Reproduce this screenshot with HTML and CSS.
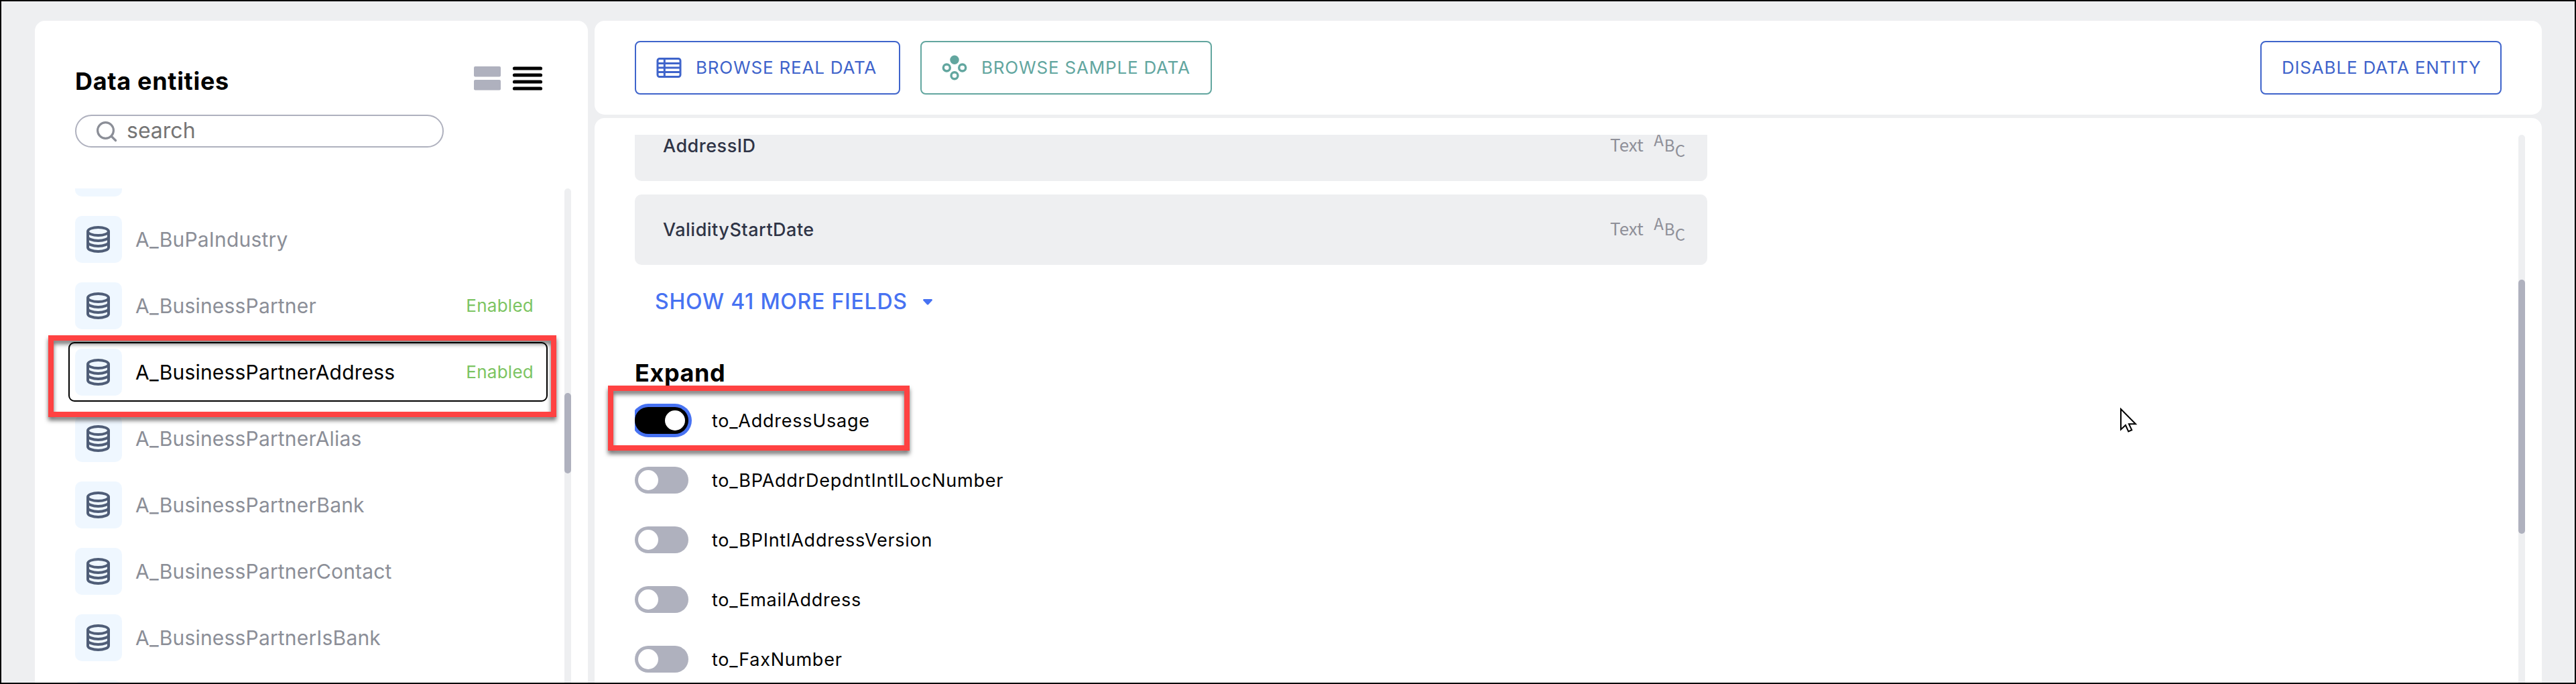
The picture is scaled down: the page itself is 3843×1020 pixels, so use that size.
FILE: index.html
```html
<!DOCTYPE html>
<html lang="en">
<head>
<meta charset="utf-8">
<title>Data entities</title>
<link rel="stylesheet" href="styles.css">
</head>
<body>
<svg class="sprite" aria-hidden="true">
  <symbol id="db" viewBox="0 0 35 40">
    <g fill="none" stroke="#4f5d77" stroke-width="4">
      <ellipse cx="17.5" cy="8" rx="15.5" ry="6"/>
      <path d="M2 8v24c0 3.300 6.900 6 15.500 6S33 35.300 33 32V8"/>
      <path d="M2 16c0 3.300 6.900 6 15.500 6S33 19.300 33 16M2 24c0 3.300 6.900 6 15.500 6S33 27.300 33 24"/>
    </g>
  </symbol>
</svg>
<div class="app">
  <aside class="sidebar">
    <header class="sidebar-head">
      <h1 class="title">Data entities</h1>
      <div class="views">
        <svg width="40" height="36" viewBox="0 0 40 36" fill="#afb1be"><rect width="40" height="15.500" rx="2"/><rect y="20" width="40" height="15.500" rx="2"/></svg>
        <svg width="46" height="36" viewBox="0 0 46 36" stroke="#000" stroke-width="5.200" stroke-linecap="round"><path d="M3.500 3h39M3.500 13h39M3.500 23h39M3.500 33h39"/></svg>
      </div>
    </header>
    <div class="search">
      <svg width="31" height="31" viewBox="0 0 31 31" fill="none" stroke="#8b8e97" stroke-width="3.200" stroke-linecap="round"><circle cx="13.500" cy="13.500" r="11.900"/><path d="M22 22l6.500 6.500"/></svg>
      <span class="placeholder">search</span>
    </div>
    <div class="list-area">
      <div class="list-clip">
        <ul class="entities">
          <li class="entity"><span class="tile"></span></li>
          <li class="entity"><span class="tile"><svg class="db"><use href="#db"/></svg></span><span class="name">A_BuPaIndustry</span></li>
          <li class="entity"><span class="tile"><svg class="db"><use href="#db"/></svg></span><span class="name">A_BusinessPartner</span><span class="status">Enabled</span></li>
          <li class="entity selected"><span class="tile"><svg class="db"><use href="#db"/></svg></span><span class="name">A_BusinessPartnerAddress</span><span class="status">Enabled</span></li>
          <li class="entity"><span class="tile"><svg class="db"><use href="#db"/></svg></span><span class="name">A_BusinessPartnerAlias</span></li>
          <li class="entity"><span class="tile"><svg class="db"><use href="#db"/></svg></span><span class="name">A_BusinessPartnerBank</span></li>
          <li class="entity"><span class="tile"><svg class="db"><use href="#db"/></svg></span><span class="name">A_BusinessPartnerContact</span></li>
          <li class="entity"><span class="tile"><svg class="db"><use href="#db"/></svg></span><span class="name">A_BusinessPartnerIsBank</span></li>
          <li class="entity"><span class="tile"></span></li>
        </ul>
      </div>
      <div class="track"><div class="thumb thumb-side"></div></div>
    </div>
  </aside>
  <main class="main">
    <div class="toolbar">
      <button class="btn blue real">
        <svg width="38" height="30" viewBox="0 0 38 30" fill="none" stroke="#3f64cb" stroke-width="3"><rect x="2" y="1.500" width="34" height="27" rx="3"/><path d="M12.300 2v26M2 8.500h34M2 15h34M2 21.500h34"/></svg>
        <span>BROWSE REAL DATA</span>
      </button>
      <button class="btn teal sample">
        <svg width="38" height="38" viewBox="0 0 38 38" fill="none" stroke="#62a69f" stroke-width="3.400"><circle cx="19" cy="7.300" r="6.700" fill="#62a69f" stroke="none"/><circle cx="7.300" cy="19" r="5"/><circle cx="30.700" cy="19" r="5"/><circle cx="19" cy="30.700" r="5"/></svg>
        <span>BROWSE SAMPLE DATA</span>
      </button>
      <button class="btn blue disable"><span>DISABLE DATA ENTITY</span></button>
    </div>
    <section class="panel">
      <div class="content-clip">
        <div class="content">
          <div class="fields">
            <div class="field"><span class="field-name">AddressID</span><span class="type">Text</span><svg class="abc" viewBox="0 0 52 44"><text x="3.200" y="22">A</text><text x="18.800" y="30">B</text><text x="34.700" y="37.500">C</text></svg></div>
            <div class="field"><span class="field-name">ValidityStartDate</span><span class="type">Text</span><svg class="abc" viewBox="0 0 52 44"><text x="3.200" y="22">A</text><text x="18.800" y="30">B</text><text x="34.700" y="37.500">C</text></svg></div>
          </div>
          <div class="more"><span>SHOW 41 MORE FIELDS</span><svg width="14" height="9" viewBox="0 0 14 9" fill="#4772f2"><path d="M1.500 0h11c1.300 0 1.800 1.300 1 2.200L8.200 8c-.7.700-1.700.7-2.400 0L.5 2.200C-.3 1.300.2 0 1.500 0z"/></svg></div>
          <h2 class="title expand">Expand</h2>
          <div class="toggles">
            <label class="option"><span class="toggle on"></span>to_AddressUsage</label>
            <label class="option"><span class="toggle"></span>to_BPAddrDepdntIntlLocNumber</label>
            <label class="option"><span class="toggle"></span>to_BPIntlAddressVersion</label>
            <label class="option"><span class="toggle"></span>to_EmailAddress</label>
            <label class="option"><span class="toggle"></span>to_FaxNumber</label>
          </div>
        </div>
      </div>
      <div class="track"><div class="thumb thumb-main"></div></div>
    </section>
  </main>
  <div class="callout callout-entity"></div>
  <div class="callout callout-toggle"></div>
  <svg class="cursor" viewBox="0 0 28 40" fill="#fff" stroke="#000" stroke-width="2"><path d="M2 2v30.500l7-6.500 4.300 9.500 5-2.300-4.300-9H24z"/></svg>
</div>
</body>
</html>
```
FILE: styles.css
```css
* { box-sizing: border-box; }
body { margin: 0; font-family: Inter, "Liberation Sans", sans-serif; color: #000; }
h1, h2, ul { margin: 0; padding: 0; }
svg { display: block; flex: none; }
.sprite { position: absolute; width: 0; height: 0; }

.app {
  position: relative;
  display: flex;
  gap: 10px;
  width: 3843px;
  height: 1020px;
  padding: 29px 49px 0 50px;
  border: 2px solid #000;
  background: #eeeff1;
  overflow: hidden;
}

/* Sidebar */
.sidebar {
  display: flex;
  flex-direction: column;
  width: 825px;
  flex: none;
  background: #fff;
  border-radius: 15px 15px 0 0;
}
.sidebar-head {
  display: flex;
  justify-content: space-between;
  height: 140px;
  padding: 68px 67px 0 60px;
}
.title { font-size: 36px; line-height: 44px; font-weight: 700; letter-spacing: .68px; }
.views { display: flex; gap: 17px; }
.search {
  display: flex;
  gap: 14px;
  width: 550px;
  height: 49px;
  flex: none;
  margin-left: 60px;
  padding: 8px 0 0 30px;
  border: 2px solid #afb1be;
  border-radius: 25px;
}
.placeholder { font-size: 32px; line-height: 28px; color: #757575; }
.list-area {
  display: flex;
  justify-content: space-between;
  flex: 1;
  min-height: 0;
  margin-top: 61px;
  padding: 0 25px 0 50px;
}
.list-clip { width: 715px; overflow: hidden; }
.entities { display: flex; flex-direction: column; gap: 10px; margin-top: -68px; list-style: none; }
.entity {
  display: flex;
  height: 89px;
  flex: none;
  padding: 8px 19px 0 8px;
  border: 2px solid transparent;
  border-radius: 9px;
  line-height: 70px;
}
.selected { border-color: #000; }
.tile { width: 70px; height: 70px; padding: 15px 0 0 17px; border-radius: 10px; background: #eff7ff; }
.db { width: 35px; height: 40px; }
.name { flex: 1; margin-left: 20px; font-size: 30px; letter-spacing: .18px; color: #8b8e97; }
.selected .name { color: #000; }
.status { font-size: 26px; letter-spacing: .25px; color: #7cc462; }

.track { width: 10px; border-radius: 5px 5px 0 0; background: #eeeff1; }
.thumb { width: 10px; border-radius: 5px; background: #afb1be; }
.thumb-side { height: 120px; margin-top: 305px; }
.thumb-main { height: 379px; margin-top: 216px; }

/* Main column */
.main { display: flex; flex-direction: column; gap: 5px; flex: 1; }
.toolbar {
  display: flex;
  align-items: center;
  gap: 30px;
  height: 140px;
  flex: none;
  padding: 0 60px;
  border-radius: 15px;
  background: #fff;
}
.btn {
  display: flex;
  align-items: center;
  height: 80px;
  padding: 0 30px;
  border: 2px solid;
  border-radius: 8px;
  background: #fff;
  font: 400 26px/30px Inter, "Liberation Sans", sans-serif;
  letter-spacing: .8px;
  white-space: nowrap;
}
.blue { color: #3f64cb; border-color: #3f64cb; }
.teal { color: #62a69f; border-color: #62a69f; }
.real { width: 396px; gap: 21px; }
.sample { width: 435px; gap: 21px; }
.disable { width: 360px; margin-left: auto; }

.panel {
  display: flex;
  justify-content: space-between;
  flex: 1;
  min-height: 0;
  padding: 25px 25px 0 60px;
  border-radius: 15px 15px 0 0;
  background: #fff;
}
.content-clip { width: 1600px; overflow: hidden; }
.content { margin-top: -36px; }
.fields { display: flex; flex-direction: column; gap: 20px; }
.field {
  display: flex;
  align-items: center;
  height: 105px;
  padding: 0 31px 0 42px;
  border-radius: 10px;
  background: #eeeff1;
}
.field-name { flex: 1; font-size: 27px; font-weight: 550; letter-spacing: .5px; color: #2f3446; }
.type, .abc { font-family: "Noto Sans CJK SC", "Noto Sans", sans-serif; color: #8f9099; }
.type { width: 62px; font-size: 26px; line-height: 30px; padding-bottom: 6px; }
.abc { width: 52px; height: 44px; font-size: 24px; fill: #8f9099; }
.more {
  display: flex;
  align-items: center;
  gap: 23px;
  margin: 35px 0 0 30px;
  font-size: 32px;
  line-height: 40px;
  font-weight: 550;
  letter-spacing: .75px;
  color: #4772f2;
}
.expand { margin-top: 64px; letter-spacing: .6px; }
.toggles { display: flex; flex-direction: column; gap: 49px; margin-top: 29px; }
.option { display: flex; align-items: center; height: 40px; font-size: 27px; letter-spacing: .75px; }
.toggle {
  display: flex;
  width: 80px;
  height: 40px;
  margin-right: 35px;
  padding: 5px;
  border-radius: 20px;
  background: #afb1be;
}
.toggle::before { content: ""; width: 30px; height: 30px; border-radius: 50%; background: #fff; }
.on { justify-content: flex-end; background: #000; box-shadow: 0 0 0 5px #4772f2; }

/* Overlays */
.callout { position: absolute; border: 8px solid #ff4242; filter: drop-shadow(0 5px 3px rgba(0, 0, 0, .55)); }
.callout-entity { left: 70px; top: 498px; width: 758px; height: 122px; }
.callout-toggle { left: 905px; top: 573px; width: 450px; height: 97px; }
.cursor { position: absolute; left: 3160px; top: 606px; width: 28px; height: 40px; }
```
